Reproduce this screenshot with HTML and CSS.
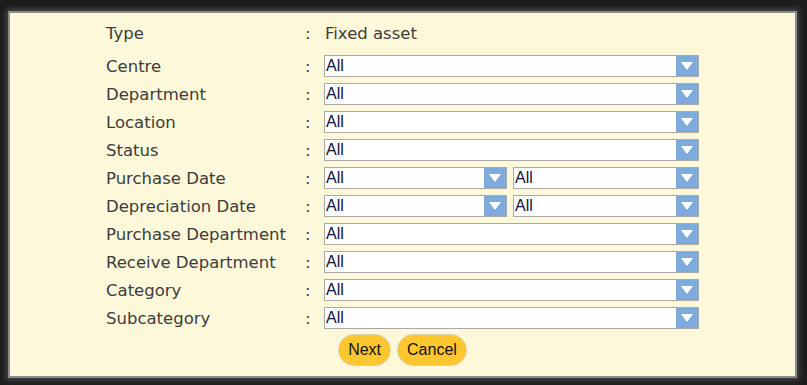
FILE: index.html
```html
<!DOCTYPE html>
<html lang="en">
<head>
  <meta charset="UTF-8" />
  <title>Asset Report Filter</title>
  <link rel="stylesheet" href="styles.css">
</head>
<body>
  <div class="panel">
    <form class="filter-form">
      <div class="row type-row">
        <span class="label">Type</span>
        <span class="colon">:</span>
        <span class="value">Fixed asset</span>
      </div>

      <div class="row">
        <span class="label">Centre</span>
        <span class="colon">:</span>
        <div class="field"><div class="combo"><span class="combo-text">All</span><span class="combo-btn"></span></div></div>
      </div>

      <div class="row">
        <span class="label">Department</span>
        <span class="colon">:</span>
        <div class="field"><div class="combo"><span class="combo-text">All</span><span class="combo-btn"></span></div></div>
      </div>

      <div class="row">
        <span class="label">Location</span>
        <span class="colon">:</span>
        <div class="field"><div class="combo"><span class="combo-text">All</span><span class="combo-btn"></span></div></div>
      </div>

      <div class="row">
        <span class="label">Status</span>
        <span class="colon">:</span>
        <div class="field"><div class="combo"><span class="combo-text">All</span><span class="combo-btn"></span></div></div>
      </div>

      <!-- date ranges: from / to -->
      <div class="row">
        <span class="label">Purchase Date</span>
        <span class="colon">:</span>
        <div class="field split">
          <div class="combo from"><span class="combo-text">All</span><span class="combo-btn"></span></div>
          <div class="combo to"><span class="combo-text">All</span><span class="combo-btn"></span></div>
        </div>
      </div>

      <div class="row">
        <span class="label">Depreciation Date</span>
        <span class="colon">:</span>
        <div class="field split">
          <div class="combo from"><span class="combo-text">All</span><span class="combo-btn"></span></div>
          <div class="combo to"><span class="combo-text">All</span><span class="combo-btn"></span></div>
        </div>
      </div>

      <div class="row">
        <span class="label">Purchase Department</span>
        <span class="colon">:</span>
        <div class="field"><div class="combo"><span class="combo-text">All</span><span class="combo-btn"></span></div></div>
      </div>

      <div class="row">
        <span class="label">Receive Department</span>
        <span class="colon">:</span>
        <div class="field"><div class="combo"><span class="combo-text">All</span><span class="combo-btn"></span></div></div>
      </div>

      <div class="row">
        <span class="label">Category</span>
        <span class="colon">:</span>
        <div class="field"><div class="combo"><span class="combo-text">All</span><span class="combo-btn"></span></div></div>
      </div>

      <div class="row">
        <span class="label">Subcategory</span>
        <span class="colon">:</span>
        <div class="field"><div class="combo"><span class="combo-text">All</span><span class="combo-btn"></span></div></div>
      </div>

      <div class="actions">
        <button type="button" class="btn">Next</button>
        <button type="button" class="btn">Cancel</button>
      </div>
    </form>
  </div>
</body>
</html>
```

FILE: styles.css
```css
html, body { height: 100%; }
body {
  margin: 0;
  padding: 11px 10px 7px 8px;
  box-sizing: border-box;
  background: #1d1d1d;
  font-family: "DejaVu Sans", Verdana, sans-serif;
}
.panel {
  height: 100%;
  box-sizing: border-box;
  background: #fdf8d9;
  border: 2px solid #8c8c8c;
  box-shadow: 0 0 6px 2px #4a4a4a;
  padding-top: 6px;
}
.filter-form { display: flex; flex-direction: column; }
.row {
  display: grid;
  grid-template-columns: 96px 198px 20px 375px;
  align-items: center;
  height: 28px;
  font-size: 16.5px;
  color: #3c3c3c;
}
.row > .label { grid-column: 2; white-space: nowrap; }
.type-row { margin-bottom: 5px; }
.colon { padding-left: 1px; }
.value { padding-left: 1px; }

.combo {
  display: flex;
  height: 22px;
  box-sizing: border-box;
  border: 1px solid #a9a9a9;
  background: #fff;
}
.combo-text {
  flex: 1;
  padding-left: 1px;
  font-family: "Liberation Sans", Arial, sans-serif;
  font-size: 16px;
  line-height: 20px;
  color: #10103a;
}
.combo-btn {
  width: 22px;
  background: #7eaadc;
  position: relative;
}
.combo-btn::after {
  content: "";
  position: absolute;
  left: 5px;
  top: 6px;
  border-left: 6px solid transparent;
  border-right: 6px solid transparent;
  border-top: 8px solid #fff;
}
.split { display: flex; gap: 6px; }
.split .from { width: 183px; }
.split .to { width: 186px; }

.actions {
  display: flex;
  justify-content: center;
  gap: 6px;
  margin-top: 2px;
}
.btn {
  height: 32px;
  padding: 0 9px;
  border: 1px solid #d8d2b4;
  border-radius: 16px;
  background: #fec72f;
  font-family: "Liberation Sans", Arial, sans-serif;
  font-size: 16px;
  color: #111;
}
```
